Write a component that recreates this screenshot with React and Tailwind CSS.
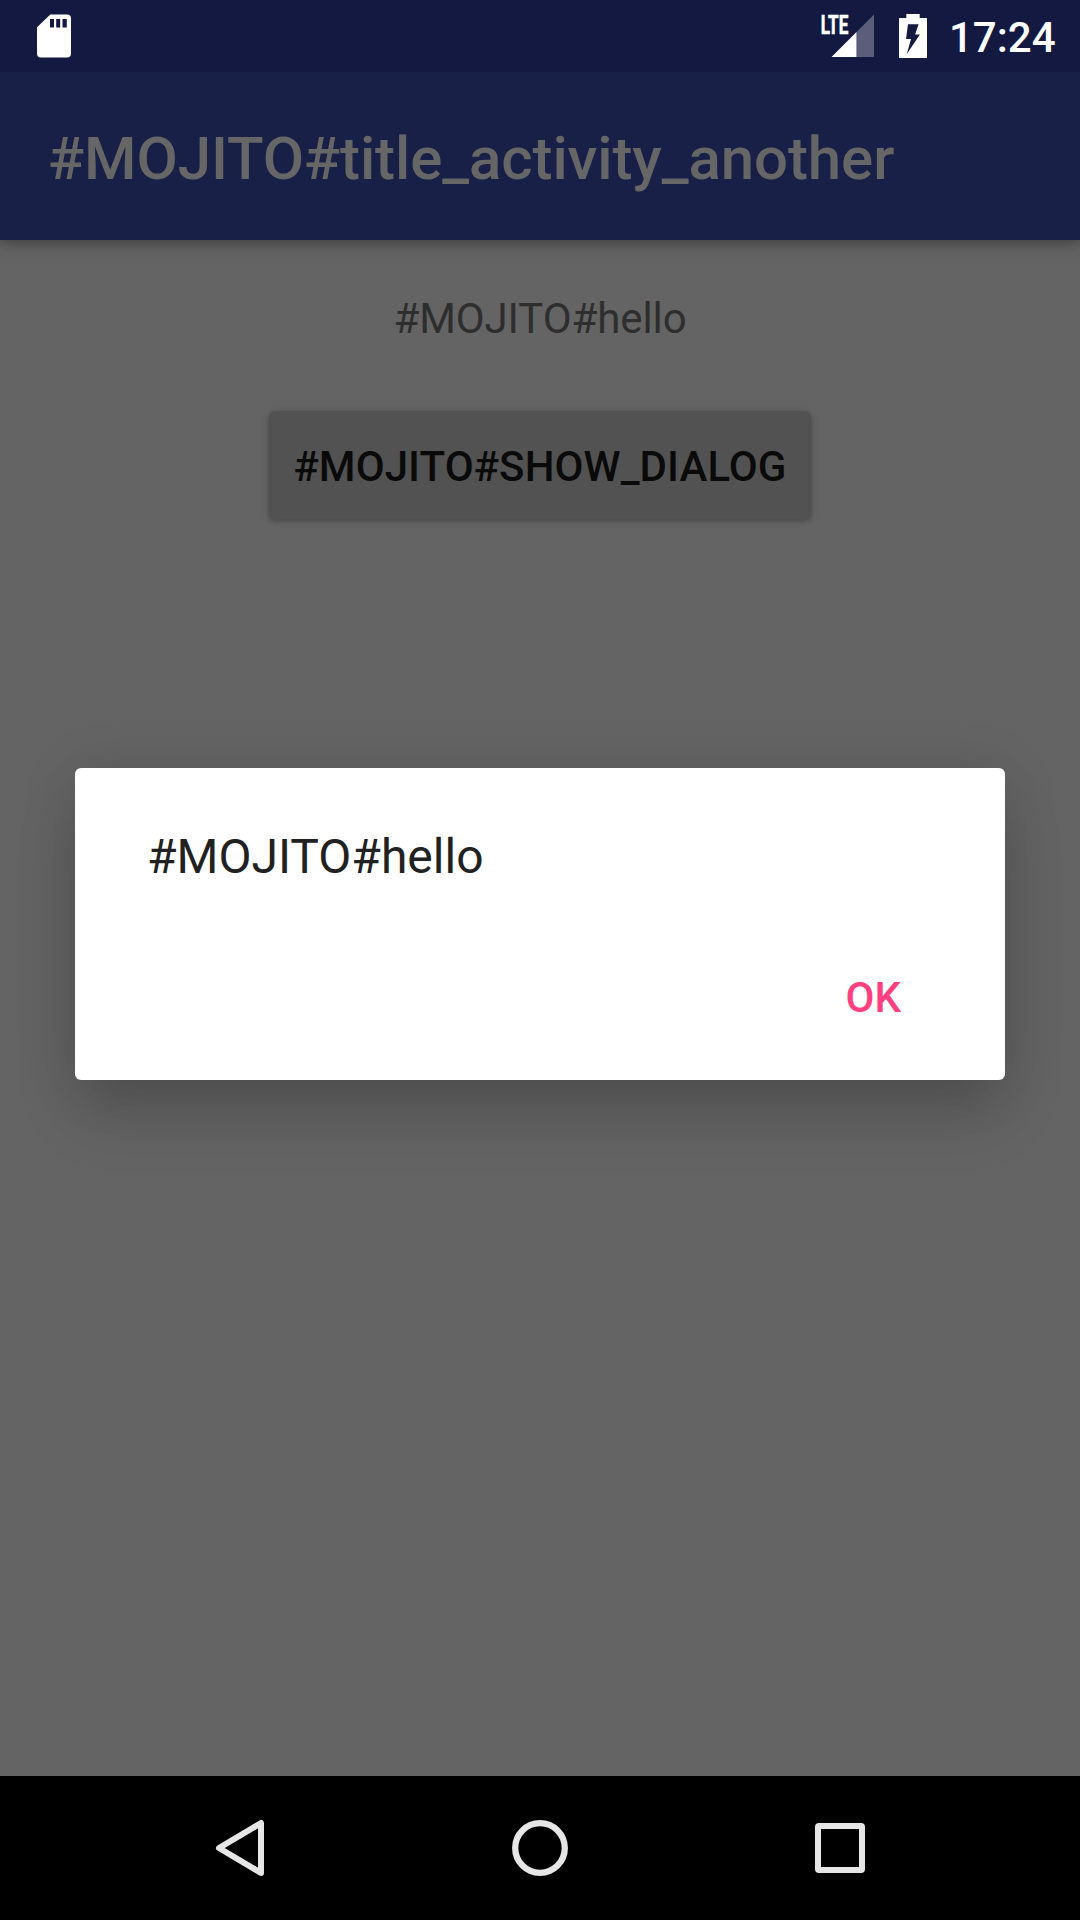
function SdCardIcon() {
  return (
    <svg className="h-[72px] w-[36px]" viewBox="36 0 36 72" aria-hidden="true">
      <path
        fill="#fff"
        fillRule="evenodd"
        d="M50.3 14.5H67a4 4 0 0 1 4 4V53.500a4 4 0 0 1-4 4H41a4 4 0 0 1-4-4V27.300ZM50 19v8.500h4V19Zm6.200 0v8.500h4V19Zm6.300 0v8.500h4.300V19Z"
      />
    </svg>
  );
}

function SignalIcon() {
  return (
    <svg className="h-[72px] w-[56px]" viewBox="820 0 56 72" aria-hidden="true">
      <path fill="#fff" fillOpacity="0.3" d="M856.500 32 874 14.500V57H856.500Z" />
      <path fill="#fff" d="M831.500 57 856.500 32V57Z" />
      <text
        x="820.700"
        y="33.500"
        fill="#fff"
        stroke="#fff"
        strokeWidth="0.600"
        textLength="27.600"
        lengthAdjust="spacingAndGlyphs"
        className="font-['Roboto',sans-serif] text-[25.5px] font-bold"
      >
        LTE
      </text>
    </svg>
  );
}

function BatteryIcon() {
  return (
    <svg className="h-[72px] w-[30px]" viewBox="898 0 30 72" aria-hidden="true">
      <path
        fill="#fff"
        fillRule="evenodd"
        d="M906.300 14H919.700V18H926.500a0.500 0.500 0 0 1 0.500 0.500V57.500a0.500 0.500 0 0 1-0.500 0.500H899.500a0.500 0.500 0 0 1-0.500-0.500V18.500a0.500 0.500 0 0 1 0.500-0.500H906.300ZM908 24.300 906 38.900H911L906.800 54 919.900 34.500H915.100L918.600 24.300Z"
      />
    </svg>
  );
}

function StatusBar() {
  return (
    <header className="z-10 flex h-[72px] shrink-0 items-center bg-[#131940] pl-9 pr-6 text-white">
      <SdCardIcon />
      <div className="ml-auto flex items-center">
        <SignalIcon />
        <div className="ml-[22px] flex">
          <BatteryIcon />
        </div>
        <span className="ml-[21px] mt-[4px] w-[107px] text-[42px] font-medium leading-[48px]">17:24</span>
      </div>
    </header>
  );
}

function NavigationBar() {
  return (
    <nav className="flex h-36 shrink-0 items-center justify-between bg-black px-[210px] text-[#e6e6e6]">
      <svg className="h-[60px] w-[60px]" viewBox="0 0 60 60" fill="none" stroke="currentColor" strokeWidth="6" strokeLinejoin="round">
        <path d="M51 5V55L9 30Z" />
      </svg>
      <svg className="h-[60px] w-[60px]" viewBox="0 0 60 60" fill="none" stroke="currentColor" strokeWidth="6.300">
        <circle cx="30" cy="30" r="24.800" />
      </svg>
      <svg className="h-[60px] w-[60px]" viewBox="0 0 60 60" fill="currentColor" fillRule="evenodd">
        <path d="M9 5H51A4 4 0 0 1 55 9V51A4 4 0 0 1 51 55H9A4 4 0 0 1 5 51V9A4 4 0 0 1 9 5ZM11 11V49H49V11Z" />
      </svg>
    </nav>
  );
}

function Dialog() {
  return (
    <div className="absolute inset-x-0 bottom-36 top-[72px] flex items-center justify-center">
      <section
        role="dialog"
        className="flex h-[312px] w-[930px] flex-col justify-between rounded-[6px] bg-white pb-[54px] pl-[72px] pr-[104px] pt-[61px] shadow-[0_36px_60px_-6px_rgba(0,0,0,0.18),0_4px_60px_rgba(0,0,0,0.1)]"
      >
        <p className="text-[48px] leading-[56px] text-[#212121]">#MOJITO#hello</p>
        <button className="self-end text-[42px] font-medium leading-[56px] text-[#ff4081]">OK</button>
      </section>
    </div>
  );
}

export default function App() {
  return (
    <div className="relative flex h-[1920px] w-[1080px] flex-col overflow-hidden bg-[#646464] font-['Roboto',sans-serif]">
      <StatusBar />
      <div className="z-0 flex h-[168px] shrink-0 items-center bg-[#192048] px-12 shadow-[0_4px_12px_rgba(0,0,0,0.35)]">
        <h1 className="mt-[5px] text-[60px] font-medium leading-[72px] tracking-[-0.09px] text-[#666666]">
          #MOJITO#title_activity_another
        </h1>
      </div>
      <main className="flex flex-1 flex-col items-center pt-[51px]">
        <p className="text-[42px] leading-[56px] tracking-[-0.1px] text-[#2e2e2e]">#MOJITO#hello</p>
        <button className="mt-16 flex h-[108px] w-[542px] items-center justify-center rounded-[6px] bg-[#525252] pt-[3px] text-[42px] font-medium tracking-[0.1px] text-[#0a0a0a] shadow-[0_2px_6px_rgba(0,0,0,0.3)]">
          #MOJITO#SHOW_DIALOG
        </button>
      </main>
      <NavigationBar />
      <Dialog />
    </div>
  );
}
